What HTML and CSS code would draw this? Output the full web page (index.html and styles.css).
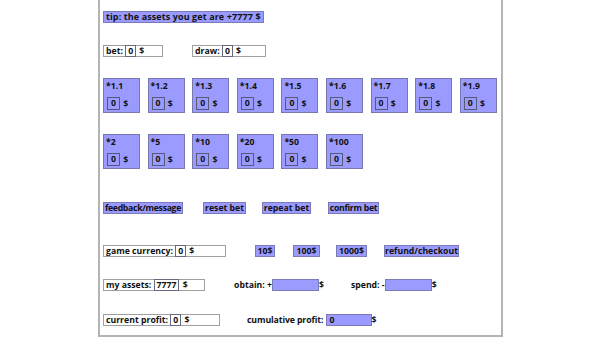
FILE: index.html
```html
<!DOCTYPE html>
<html lang="en">
<head>
    <meta charset="UTF-8">
    <meta name="viewport" content="width=device-width, initial-scale=1.0">
    <title>Bet game</title>
    <link rel="stylesheet" href="styles.css">
</head>
<body>

    <div class="frame">
        <div class="row tip-row">
            <span class="tip">tip: the assets you get are +7777 $</span>
        </div>

        <div class="row bet-row">
            <div class="field w-bet">bet: <span class="num">0</span> $</div>
            <div class="field w-draw">draw: <span class="num">0</span> $</div>
        </div>

        <div class="cards">
            <div class="card"><span>*1.1</span><div class="stake"><span class="num">0</span> $</div></div>
            <div class="card"><span>*1.2</span><div class="stake"><span class="num">0</span> $</div></div>
            <div class="card"><span>*1.3</span><div class="stake"><span class="num">0</span> $</div></div>
            <div class="card"><span>*1.4</span><div class="stake"><span class="num">0</span> $</div></div>
            <div class="card"><span>*1.5</span><div class="stake"><span class="num">0</span> $</div></div>
            <div class="card"><span>*1.6</span><div class="stake"><span class="num">0</span> $</div></div>
            <div class="card"><span>*1.7</span><div class="stake"><span class="num">0</span> $</div></div>
            <div class="card"><span>*1.8</span><div class="stake"><span class="num">0</span> $</div></div>
            <div class="card"><span>*1.9</span><div class="stake"><span class="num">0</span> $</div></div>
        </div>

        <div class="cards cards-2">
            <div class="card"><span>*2</span><div class="stake"><span class="num">0</span> $</div></div>
            <div class="card"><span>*5</span><div class="stake"><span class="num">0</span> $</div></div>
            <div class="card"><span>*10</span><div class="stake"><span class="num">0</span> $</div></div>
            <div class="card"><span>*20</span><div class="stake"><span class="num">0</span> $</div></div>
            <div class="card"><span>*50</span><div class="stake"><span class="num">0</span> $</div></div>
            <div class="card"><span>*100</span><div class="stake"><span class="num">0</span> $</div></div>
        </div>

        <div class="row actions">
            <button class="btn b-feedback">feedback/message</button>
            <button class="btn b-reset">reset bet</button>
            <button class="btn b-repeat">repeat bet</button>
            <button class="btn b-confirm">confirm bet</button>
        </div>

        <div class="row currency-row">
            <div class="field w-currency">game currency: <span class="num">0</span> $</div>
            <button class="btn b-10">10$</button>
            <button class="btn b-100">100$</button>
            <button class="btn b-1000">1000$</button>
            <button class="btn b-refund">refund/checkout</button>
        </div>

        <div class="row assets-row">
            <div class="field w-assets">my assets: <span class="num">7777</span> $</div>
            <div class="label l-obtain">obtain: +<span class="bar w-obtain"></span>$</div>
            <div class="label l-spend">spend: -<span class="bar w-spend"></span>$</div>
        </div>

        <div class="row profit-row">
            <div class="field w-profit">current profit: <span class="num">0</span> $</div>
            <div class="label l-cumul">cumulative profit: <span class="bar w-cumul">0</span>$</div>
        </div>
    </div>

</body>
</html>
```

FILE: styles.css
```css
body {
    margin: 0;
    background-color: #ffffff;
    font-family: "Open Sans", "Noto Sans", sans-serif;
    font-weight: 700;
    font-size: 8.7px;
    color: #111111;
}

.frame {
    width: 398px;
    height: 335px;
    margin-left: 98px;
    padding-left: 3px;
    border-left: 2px solid #b4b4b4;
    border-right: 2px solid #b4b4b4;
    border-bottom: 2px solid #b4b4b4;
    box-sizing: content-box;
}

.row {
    display: flex;
    align-items: center;
    height: 12px;
}

.tip-row { padding-top: 11px; }
.bet-row { margin-top: 22px; }
.actions { margin-top: 33px; height: 11px; }
.currency-row { margin-top: 32px; }
.assets-row { margin-top: 22px; }
.profit-row { margin-top: 23px; }

.tip {
    background-color: #9b9bff;
    border: 1px solid #7a7ab8;
    padding: 0 2px;
    height: 12px;
    line-height: 10px;
    box-sizing: border-box;
    font-size: 9px;
    letter-spacing: 0.1px;
}

.field {
    display: flex;
    align-items: center;
    height: 12px;
    box-sizing: border-box;
    border: 1px solid #a0a0a0;
    padding-left: 2px;
    white-space: pre;
}

.num {
    display: inline-block;
    border: 1px solid #666a80;
    height: 12px;
    line-height: 10px;
    box-sizing: border-box;
    padding: 0 2px;
    margin-right: 1px;
}

.w-bet { width: 60px; }
.w-draw { width: 74px; margin-left: 29px; }
.w-currency { width: 123px; }
.w-assets { width: 102px; }
.w-profit { width: 117px; }

.cards {
    display: flex;
    gap: 7.6px;
    margin-top: 21px;
}

.cards-2 { margin-top: 21px; }

.card {
    width: 37px;
    height: 35px;
    box-sizing: border-box;
    background-color: #9b9bff;
    border: 1px solid #7878b0;
    padding: 2px;
    display: flex;
    flex-direction: column;
    justify-content: space-between;
    line-height: 10px;
}

.stake {
    display: flex;
    align-items: center;
    white-space: pre;
    padding-left: 1px;
}

.stake .num {
    border-color: #555a78;
    padding: 0 3px;
    height: 13px;
    line-height: 11px;
}

.btn {
    font: inherit;
    color: inherit;
    background-color: #9b9bff;
    border: 1px solid #7a7ab8;
    padding: 0;
    height: 12px;
    line-height: 10px;
    margin: 0;
    text-align: center;
    white-space: nowrap;
    cursor: pointer;
}

.b-feedback { width: 80px; letter-spacing: -0.3px; }
.b-reset { width: 43px; margin-left: 20px; }
.b-repeat { width: 49px; margin-left: 16px; }
.b-confirm { width: 51px; margin-left: 17px; letter-spacing: -0.3px; }
.b-10 { width: 20px; margin-left: 29px; }
.b-100 { width: 27px; margin-left: 18px; }
.b-1000 { width: 31px; margin-left: 16px; }
.b-refund { width: 75px; margin-left: 17px; }

.label {
    display: flex;
    align-items: center;
    white-space: pre;
}

.bar {
    display: inline-block;
    background-color: #9b9bff;
    border: 1px solid #7a7ab8;
    height: 12px;
    box-sizing: border-box;
    line-height: 10px;
    padding-left: 3px;
}

.l-obtain { margin-left: 29px; }
.w-obtain { width: 47px; }
.l-spend { margin-left: 27px; }
.w-spend { width: 47px; }
.l-cumul { margin-left: 27px; letter-spacing: -0.1px; }
.w-cumul { width: 46px; }
```
